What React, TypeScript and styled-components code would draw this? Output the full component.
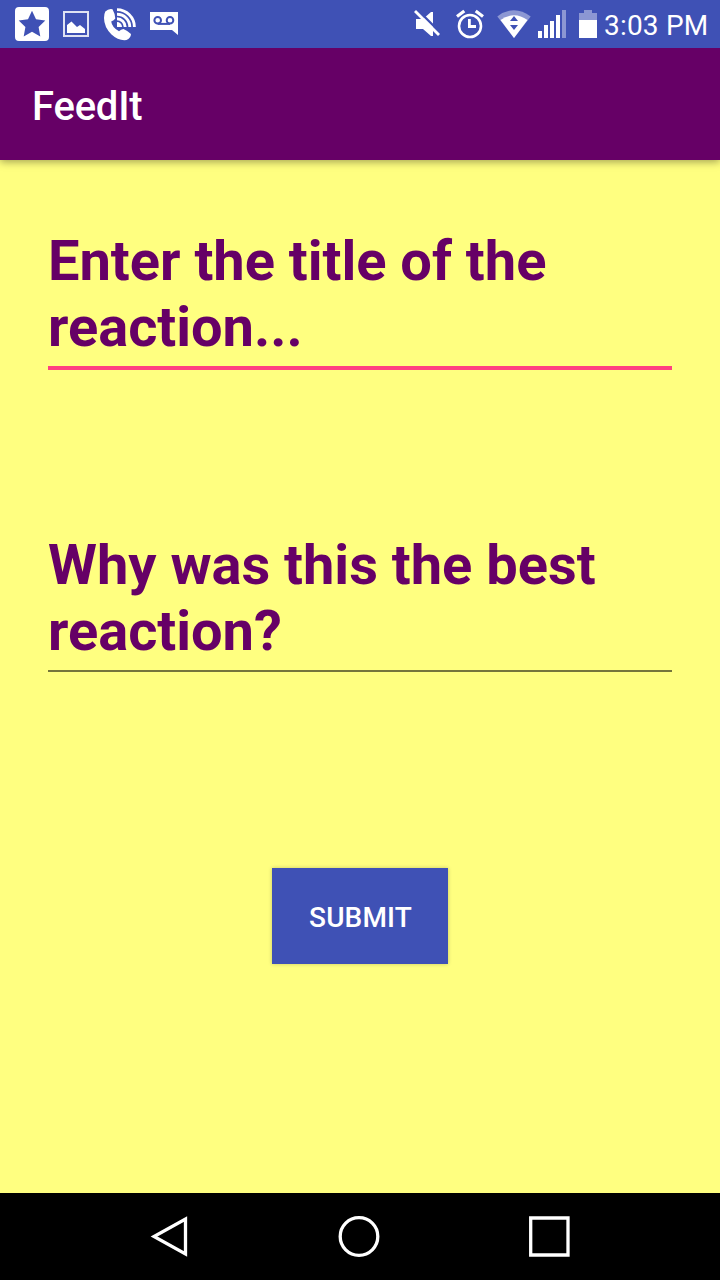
import React from 'react';
import styled, { createGlobalStyle } from 'styled-components';

const GlobalStyle = createGlobalStyle`
  *, *::before, *::after { box-sizing: border-box; }
  body { margin: 0; font-family: Roboto, "Liberation Sans", sans-serif; }
`;

const Screen = styled.div`
  display: flex;
  flex-direction: column;
  width: 720px;
  height: 1280px;
  overflow: hidden;
  background: #ffff80;
`;

const StatusBar = styled.header`
  position: relative;
  display: flex;
  flex: none;
  justify-content: space-between;
  height: 48px;
  padding: 0 12px 0 10px;
  background: #3f51b5;
  color: #fff;
`;

const IconRow = styled.div`
  display: flex;
`;

const StatusIcon = styled.svg<{ $width?: number }>`
  display: block;
  flex: none;
  width: ${({ $width = 44 }) => $width}px;
  height: 48px;
  fill: #fff;
`;

const Clock = styled.span`
  width: 106px;
  padding-top: 2px;
  padding-left: 2px;
  font-size: 28px;
  letter-spacing: 0.2px;
  line-height: 48px;
  white-space: nowrap;
`;

const Toolbar = styled.div`
  display: flex;
  flex: none;
  align-items: center;
  height: 112px;
  padding: 6px 32px 0;
  background: #660066;
  box-shadow: 0 2px 8px rgba(0, 0, 0, 0.36);
`;

const AppTitle = styled.h1`
  margin: 0;
  color: #fff;
  font-size: 40px;
  font-weight: 500;
  letter-spacing: -0.2px;
  line-height: 48px;
`;

const Form = styled.main`
  display: flex;
  flex: 1;
  flex-direction: column;
  padding: 68px 48px 0;
`;

const Field = styled.div<{ $focused?: boolean }>`
  height: ${({ $focused }) => ($focused ? 142 : 140)}px;
  margin-bottom: ${({ $focused }) => ($focused ? 162 : 196)}px;
  border-bottom: ${({ $focused }) => ($focused ? '4px solid #ff4081' : '2px solid #75753b')};
  color: #660066;
  font-size: 56px;
  font-weight: 700;
  letter-spacing: -0.02px;
  line-height: 66px;
`;

const SubmitButton = styled.button`
  align-self: center;
  width: 176px;
  height: 96px;
  padding: 3px 0 0 1px;
  border: 0;
  background: #3f51b5;
  box-shadow: 0 0 4px rgba(0, 0, 0, 0.22);
  color: #fff;
  font: 500 28px/34px Roboto, "Liberation Sans", sans-serif;
  letter-spacing: 0.15px;
`;

const NavBar = styled.nav`
  display: flex;
  flex: none;
  justify-content: center;
  gap: 142px;
  height: 87px;
  padding-right: 2px;
  background: #000;
`;

const NavIcon = styled.svg`
  display: block;
  width: 48px;
  height: 87px;
  fill: none;
  stroke: #fff;
  stroke-width: 3.3;
`;

export default function App() {
  return (
    <>
      <GlobalStyle />
      <Screen>
        <StatusBar>
          <IconRow>
            <StatusIcon viewBox="10 0 44 48">
              <path
                fillRule="evenodd"
                d="M19 7H45Q49 7 49 11V37Q49 41 45 41H19Q15 41 15 37V11Q15 7 19 7ZM32 10.7L36 19.3L45.3 20.5L38.6 27L40.3 36.4L32 31.8L23.7 36.4L25.4 27L18.7 20.5L28 19.3Z"
              />
            </StatusIcon>
            <StatusIcon viewBox="54 0 44 48">
              <path fill="none" stroke="#dfe2f3" strokeWidth="2" d="M64 12H88V36H64Z" />
              <path d="M67 25L71.5 21.5L77 27L80 25L85 29V33H67Z" />
            </StatusIcon>
            <StatusIcon viewBox="98 0 44 48">
              <path d="M105.3 11.5Q108.5 8.3 112.5 9.2Q115 13.5 115.3 18.5Q114 20.5 111.2 21.5Q112 27.5 119 31.2Q121 29.2 123.5 29Q128 31 131 34Q130.8 38 126.5 40Q118.5 41 111.5 34.5Q104 27 104 18Q104 14 105.3 11.5Z" />
              <path d="M117 22A5 5 0 0 1 122 27H117Z" />
              <g fill="none" stroke="#fff" strokeWidth="2.9">
                <path d="M117 18.8A8.2 8.2 0 0 1 125.2 27" />
                <path d="M117 14.2A12.8 12.8 0 0 1 129.8 27" />
                <path d="M117 9.6A17.4 17.4 0 0 1 134.4 27" />
              </g>
            </StatusIcon>
            <StatusIcon viewBox="142 0 44 48">
              <path d="M150 12H178V35L172 30H150Z" />
              <g fill="none" stroke="#3f51b5" strokeWidth="2">
                <circle cx="157.7" cy="20.2" r="3.3" />
                <circle cx="170" cy="20.2" r="3.3" />
                <path d="M157.7 23.9H170" />
              </g>
            </StatusIcon>
          </IconRow>
          <IconRow>
            <StatusIcon viewBox="404 0 44 48">
              <path d="M416 19H423L431 12H433V36H431L423 29H416Z" />
              <path stroke="#3f51b5" strokeWidth="2.4" d="M416.8 9.2L440.8 33.2" />
              <path stroke="#fff" strokeWidth="2.8" d="M415 11L439 35" />
            </StatusIcon>
            <StatusIcon viewBox="448 0 44 48">
              <g fill="none" stroke="#fff">
                <circle cx="470" cy="26" r="11" strokeWidth="2.6" />
                <path strokeWidth="3.2" d="M457 16.5L464.3 11M475.7 11L483 16.5" />
                <path strokeWidth="2.8" d="M469.4 19V26.5H476" />
              </g>
            </StatusIcon>
            <StatusIcon viewBox="492 0 44 48">
              <path fill="#8c97d3" d="M497.3 16.5Q514 4 530.7 16.5L514 38Z" />
              <path d="M500.5 20Q514 10.5 527.5 20L514 38Z" />
              <path fill="#3f51b5" d="M514 16L518 21H510ZM510 25H518L514 30Z" />
            </StatusIcon>
            <StatusIcon $width={38} viewBox="536 0 38 48">
              <path d="M538 31H542V38H538ZM544 25H548V38H544ZM550 21H554V38H550ZM556 15H560V38H556Z" />
              <path fill="#8c97d3" d="M562 10H566V38H562Z" />
            </StatusIcon>
            <StatusIcon $width={28} viewBox="574 0 28 48">
              <path fill="#8c97d3" d="M579 13H584V10H592V13H597V20H579Z" />
              <path d="M579 20H597V38H579Z" />
            </StatusIcon>
            <Clock>3:03 PM</Clock>
          </IconRow>
        </StatusBar>
        <Toolbar>
          <AppTitle>FeedIt</AppTitle>
        </Toolbar>
        <Form>
          <Field $focused>Enter the title of the reaction...</Field>
          <Field>Why was this the best reaction?</Field>
          <SubmitButton type="button">SUBMIT</SubmitButton>
        </Form>
        <NavBar>
          <NavIcon viewBox="145 1193 48 87">
            <path d="M185.5 1219V1254L154 1236.5Z" />
          </NavIcon>
          <NavIcon viewBox="335 1193 48 87">
            <circle cx="359" cy="1236.5" r="18.8" />
          </NavIcon>
          <NavIcon viewBox="525 1193 48 87">
            <path d="M530.7 1218H568V1255H530.7Z" />
          </NavIcon>
        </NavBar>
      </Screen>
    </>
  );
}
